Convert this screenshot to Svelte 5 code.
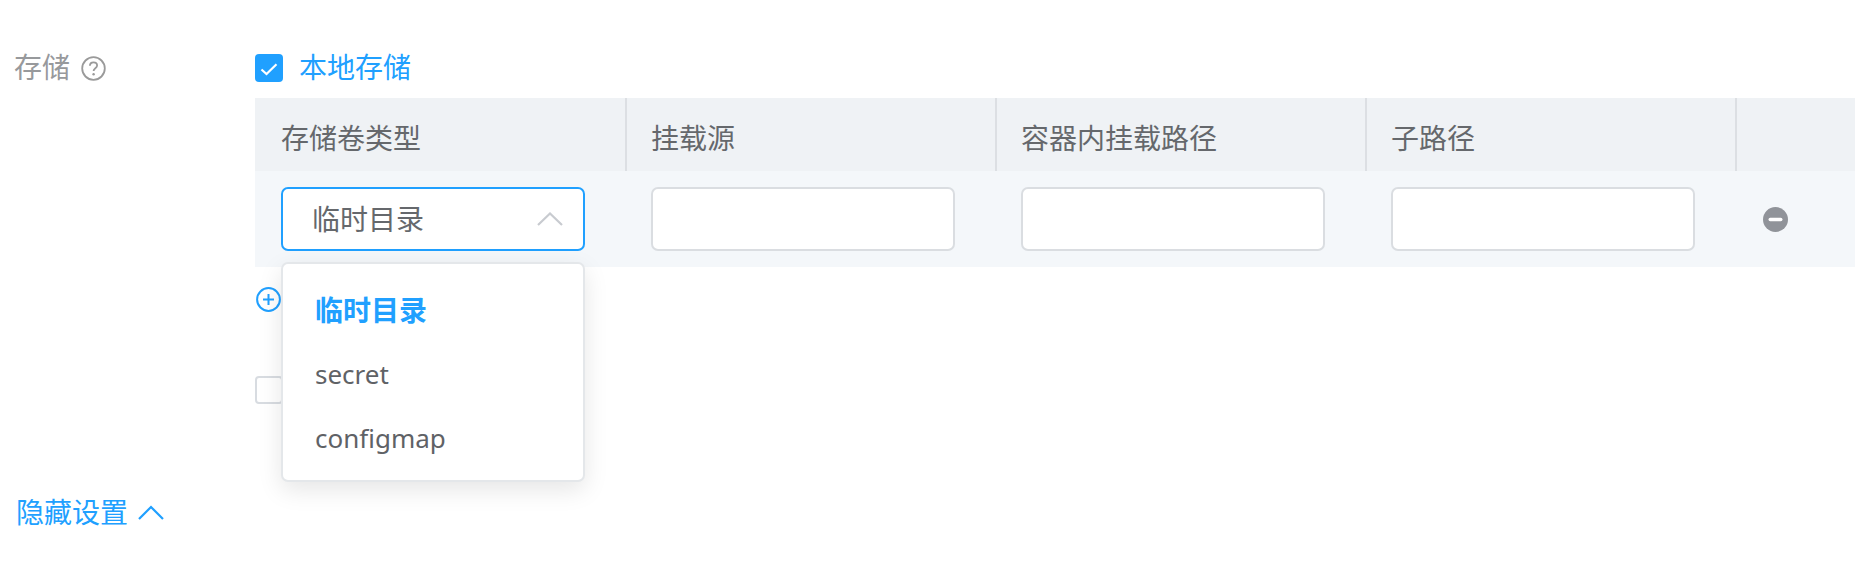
<script>
  const headers = ['存储卷类型', '挂载源', '容器内挂载路径', '子路径'];
  const options = ['临时目录', 'secret', 'configmap'];
</script>

<main class="page">
  <section class="form-row">
    <div class="label">
      <span class="lift">存储</span>
      <svg class="help" viewBox="0 0 25 25" width="25" height="25" aria-hidden="true">
        <circle cx="12.5" cy="12.5" r="11.3" fill="none" stroke="#9a9a9a" stroke-width="1.8" />
        <path d="M8.9 9.8c0-2.2 1.6-3.5 3.6-3.5s3.6 1.3 3.6 3.2c0 2.8-3.5 2.7-3.5 5.5" fill="none" stroke="#9a9a9a" stroke-width="1.8" />
        <circle cx="12.6" cy="18.2" r="1.2" fill="#9a9a9a" />
      </svg>
    </div>
    <div class="content">
      <label class="check-line">
        <span class="checkbox on">
          <svg viewBox="0 0 28 28" width="28" height="28" aria-hidden="true">
            <path d="M6.5 15.5l5 4.5 10-9.8" fill="none" stroke="#fff" stroke-width="2.2" />
          </svg>
        </span>
        <span class="lift">本地存储</span>
      </label>

      <div class="table">
        <div class="thead">
          {#each headers as h}
            <div class="th">{h}</div>
          {/each}
          <div class="th last"></div>
        </div>
        <div class="tbody">
          <div class="td">
            <div class="select">
              <span>临时目录</span>
              <svg viewBox="0 0 26 14" width="26" height="14" aria-hidden="true">
                <path d="M1 13L13 1.5 25 13" fill="none" stroke="#c8cbd0" stroke-width="2.2" />
              </svg>
            </div>
            <ul class="menu">
              {#each options as o, i}
                <li class:active={i === 0}>{o}</li>
              {/each}
            </ul>
          </div>
          <div class="td"><div class="input"></div></div>
          <div class="td"><div class="input"></div></div>
          <div class="td"><div class="input"></div></div>
          <div class="td last">
            <svg viewBox="0 0 25 25" width="25" height="25" aria-hidden="true">
              <circle cx="12.5" cy="12.5" r="12.5" fill="#909399" />
              <rect x="5.5" y="10.8" width="14" height="3.4" rx="1.7" fill="#fff" />
            </svg>
          </div>
        </div>
      </div>

      <div class="add">
        <svg viewBox="0 0 25 25" width="25" height="25" aria-hidden="true">
          <circle cx="12.5" cy="12.5" r="11.4" fill="none" stroke="#20a0ff" stroke-width="2" />
          <path d="M7 12.5h11M12.5 7v11" stroke="#20a0ff" stroke-width="2" />
        </svg>
      </div>
      <div class="checkbox off"></div>
    </div>
  </section>

  <div class="toggle">
    <span>隐藏设置</span>
    <svg viewBox="0 0 26 15" width="26" height="15" aria-hidden="true">
      <path d="M1 14L13 2l12 12" fill="none" stroke="#20a0ff" stroke-width="2.2" />
    </svg>
  </div>
</main>

<style>
  :global(body) {
    margin: 0;
    background: #fff;
    overflow: hidden;
  }
  .page {
    height: 574px;
    box-sizing: border-box;
    padding-top: 49px;
    font: 28px/38px "Noto Sans", "Noto Sans CJK SC", sans-serif;
    color: #5f6266;
  }
  .form-row {
    display: flex;
  }
  .label {
    width: 255px;
    flex: none;
    box-sizing: border-box;
    padding-left: 14px;
    display: flex;
    align-items: center;
    align-self: flex-start;
    height: 38px;
    gap: 11px;
    color: #97999c;
  }
  .lift {
    margin-bottom: 2px;
  }
  .content {
    width: 1600px;
    flex: none;
  }
  .check-line {
    display: flex;
    align-items: center;
    gap: 16px;
    height: 38px;
    margin-bottom: 11px;
    color: #20a0ff;
  }
  .checkbox {
    box-sizing: border-box;
    display: block;
    width: 28px;
    height: 28px;
    border-radius: 4px;
  }
  .checkbox.on {
    background: #20a0ff;
  }
  .checkbox svg {
    display: block;
  }
  .checkbox.off {
    border: 2px solid #d8dce1;
    margin-top: 64px;
  }
  .thead,
  .tbody {
    display: grid;
    grid-template-columns: 372px 370px 370px 370px 118px;
  }
  .thead {
    grid-template-rows: 73px;
    background: #eff2f5;
  }
  .tbody {
    grid-template-rows: 96px;
    background: #f4f7fa;
  }
  .th {
    box-sizing: border-box;
    padding: 8px 0 0 24px;
    line-height: 65px;
    border-right: 2px solid #dcdfe3;
    color: #65686c;
  }
  .th:first-child {
    padding-left: 26px;
  }
  .th.last {
    border: 0;
  }
  .td {
    position: relative;
    padding: 16px 0 0 24px;
  }
  .td:first-child {
    padding-left: 26px;
  }
  .td.last {
    padding: 36px 0 0 26px;
  }
  .td.last svg {
    display: block;
  }
  .input,
  .select {
    box-sizing: border-box;
    width: 304px;
    height: 64px;
    background: #fff;
    border: 2px solid #dadde1;
    border-radius: 7px;
  }
  .select {
    border-color: #20a0ff;
    display: flex;
    align-items: center;
    justify-content: space-between;
    padding: 0 20px 0 29px;
    color: #65686c;
  }
  .menu {
    position: absolute;
    z-index: 2;
    left: 26px;
    top: 91px;
    width: 304px;
    height: 220px;
    box-sizing: border-box;
    margin: 0;
    padding: 14px 0;
    list-style: none;
    background: #fff;
    border: 2px solid #e4e7ea;
    border-radius: 7px;
    box-shadow: 0 8px 24px rgba(0, 0, 0, 0.1);
  }
  .menu li {
    height: 64px;
    line-height: 64px;
    padding-left: 32px;
    font-size: 26px;
    color: #5f6266;
  }
  .menu li.active {
    font-size: 28px;
    font-weight: 700;
    color: #20a0ff;
  }
  .add {
    margin-top: 20px;
    height: 25px;
    padding-left: 1px;
  }
  .add svg {
    display: block;
  }
  .toggle {
    margin-top: 89px;
    padding-left: 16px;
    display: flex;
    align-items: center;
    gap: 10px;
    color: #20a0ff;
  }
</style>
